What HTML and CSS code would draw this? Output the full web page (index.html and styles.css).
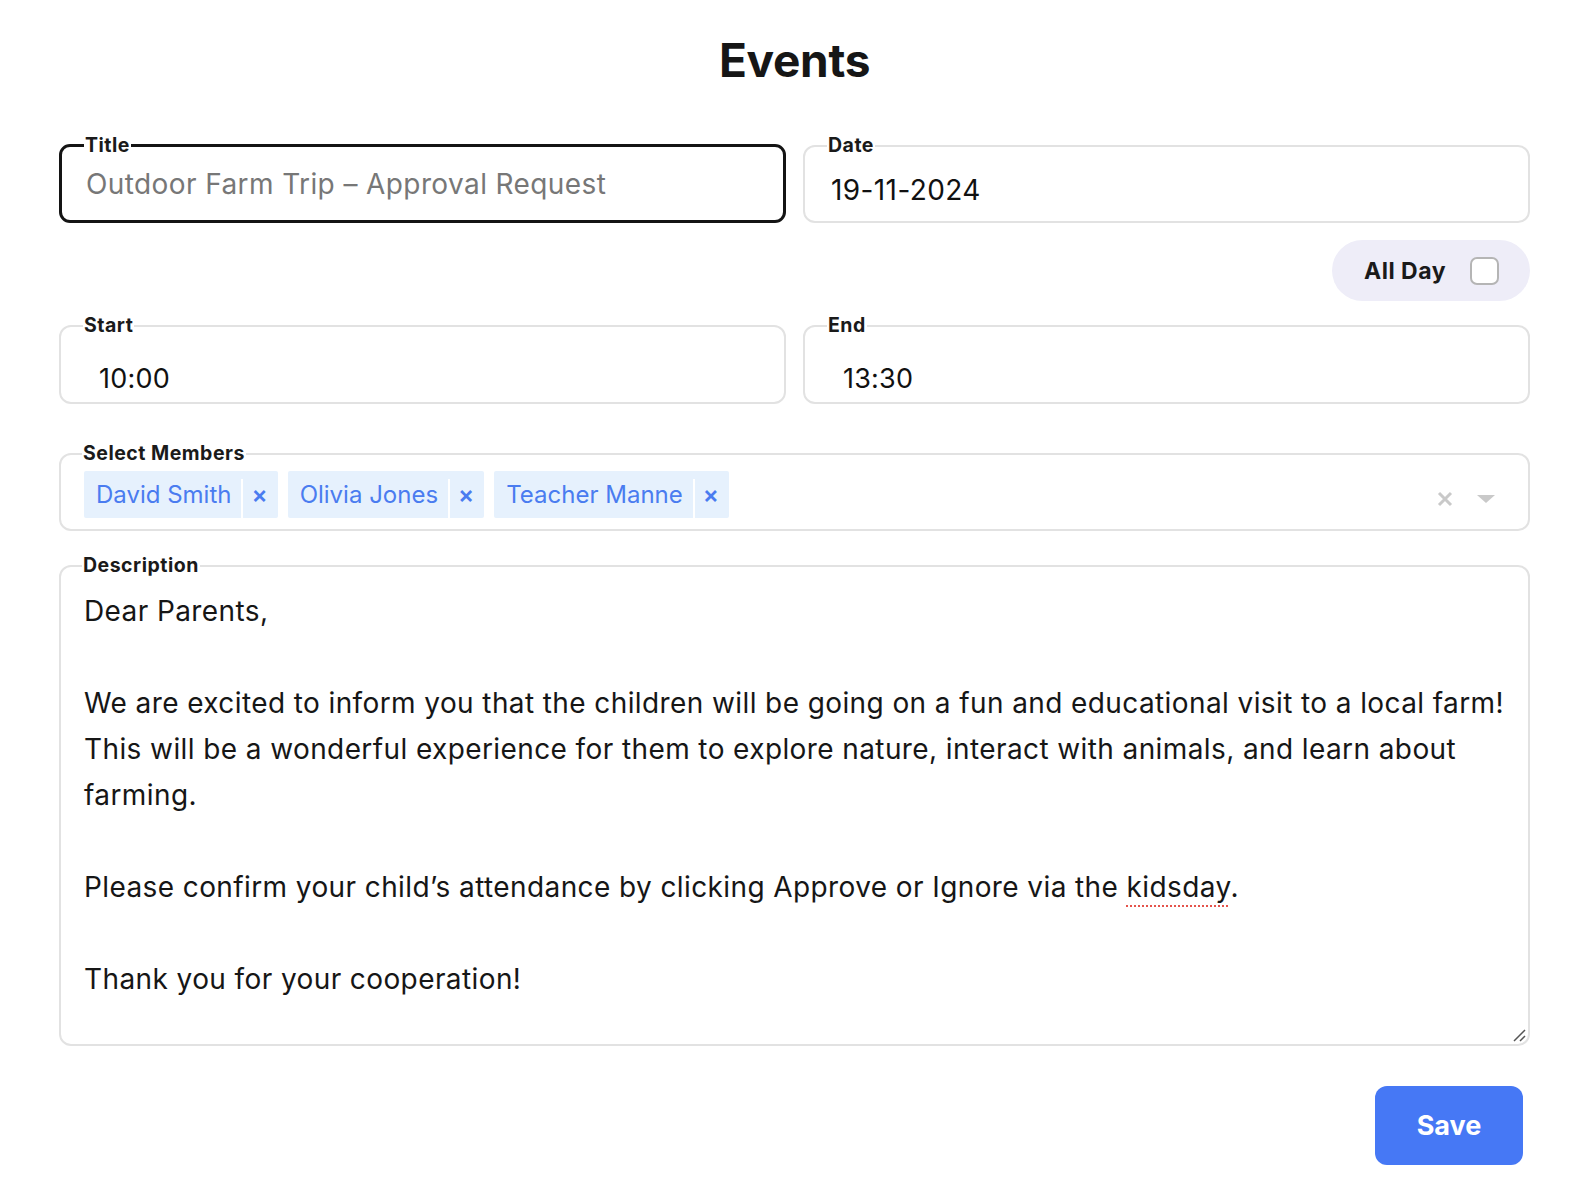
FILE: index.html
```html
<!DOCTYPE html>
<html lang="en">
<head>
<meta charset="utf-8">
<title>Events</title>
<link rel="stylesheet" href="styles.css">
</head>
<body>
<main class="page">
  <h1 class="page-title">Events</h1>
  <div class="grid">
    <fieldset class="field field-focus">
      <legend class="field-label">Title</legend>
      <div class="field-value placeholder">Outdoor Farm Trip – Approval Request</div>
    </fieldset>
    <fieldset class="field field-date">
      <legend class="field-label">Date</legend>
      <div class="field-value">19-11-2024</div>
    </fieldset>
    <div class="allday-row">
      <label class="allday">
        <span class="allday-text">All Day</span>
        <span class="checkbox"></span>
      </label>
    </div>
    <fieldset class="field field-time">
      <legend class="field-label">Start</legend>
      <div class="field-value time-value">10:00</div>
    </fieldset>
    <fieldset class="field field-time">
      <legend class="field-label">End</legend>
      <div class="field-value time-value">13:30</div>
    </fieldset>
  </div>

  <fieldset class="field field-members">
    <legend class="field-label">Select Members</legend>
    <div class="members">
      <div class="chips">
        <span class="chip"><span class="chip-label">David Smith</span><span class="chip-x">×</span></span>
        <span class="chip"><span class="chip-label">Olivia Jones</span><span class="chip-x">×</span></span>
        <span class="chip"><span class="chip-label">Teacher Manne</span><span class="chip-x">×</span></span>
      </div>
      <div class="indicators">
        <svg class="clear-icon" width="18" height="18" viewBox="0 0 18 18"><path d="M3 3L15 15M15 3L3 15" stroke="#c9c9c9" stroke-width="3" stroke-linecap="butt"/></svg>
        <svg class="arrow-icon" width="20" height="10" viewBox="0 0 20 10"><path d="M1 1H19L10 9Z" fill="#c9c9c9"/></svg>
      </div>
    </div>
  </fieldset>

  <fieldset class="field field-desc">
    <legend class="field-label">Description</legend>
    <div class="desc">
      <p>Dear Parents,</p>
      <p class="blank">&nbsp;</p>
      <p>We are excited to inform you that the children will be going on a fun and educational visit to a local farm! This will be a wonderful experience for them to explore nature, interact with animals, and learn about farming.</p>
      <p class="blank">&nbsp;</p>
      <p>Please confirm your child’s attendance by clicking Approve or Ignore via the <span class="spell">kidsday</span>.</p>
      <p class="blank">&nbsp;</p>
      <p>Thank you for your cooperation!</p>
    </div>
    <svg class="resize" width="16" height="16" viewBox="0 0 16 16"><path d="M15 4L4 15M15 10L10 15" stroke="#555" stroke-width="1.5"/></svg>
  </fieldset>

  <div class="actions">
    <button class="save">Save</button>
  </div>
</main>
</body>
</html>
```

FILE: styles.css
```css
* { box-sizing: border-box; }
html, body { margin: 0; padding: 0; background: #fff; }
body {
  font-family: Inter, "Noto Sans", "Liberation Sans", sans-serif;
  color: #1a1a1a;
}
.page {
  padding: 28px 46px 40px 59px;
}
.page-title {
  margin: 0 0 42px;
  text-align: center;
  font-size: 46px;
  font-weight: 700;
  letter-spacing: -0.3px;
  line-height: 64px;
  color: #161616;
}
.grid {
  display: grid;
  grid-template-columns: 1fr 1fr;
  column-gap: 17px;
}
.field {
  position: relative;
  margin: 0;
  min-width: 0;
  border: 2px solid #e2e2e2;
  border-radius: 12px;
  padding: 0 20px;
}
.field-label {
  padding: 0 1px;
  font-size: 19.5px;
  font-weight: 700;
  letter-spacing: 0.5px;
  line-height: 23px;
  color: #1a1a1a;
}
.field-value {
  font-size: 28px;
  letter-spacing: 0.4px;
  line-height: 32px;
  color: #111;
}
.time-value {
  font-size: 27px;
  letter-spacing: 0.2px;
}
.field-focus {
  border: 3px solid #141414;
  border-radius: 11px;
  padding: 11px 19px 20px 24px;
}
.field-focus .field-label { margin-left: -2px; }
.placeholder { color: #777; }
.field-date {
  padding: 17px 22px 15px 26px;
}
.field-date .field-label { margin-left: -4px; }
.allday-row {
  grid-column: 2;
  display: flex;
  justify-content: flex-end;
  margin: 17px 0 13px;
}
.allday {
  display: flex;
  align-items: center;
  gap: 24px;
  height: 61px;
  padding: 0 31px 0 32px;
  background: #eeedf8;
  border-radius: 31px;
}
.allday-text {
  font-size: 23px;
  font-weight: 700;
  letter-spacing: 0.5px;
  color: #1a1a1a;
}
.checkbox {
  width: 29px;
  height: 28px;
  border: 2px solid #b5b5b5;
  border-radius: 7px;
  background: #fff;
}
.field-time {
  padding: 26px 20px 7px 38px;
}
.field-time .field-label { margin-left: -16px; }
.field-members {
  margin-top: 38px;
  padding: 6px 32px 11px 23px;
}
.field-members .field-label { margin-left: -2px; }
.members {
  display: flex;
  align-items: center;
  justify-content: space-between;
}
.chips {
  display: flex;
  gap: 10px;
}
.chip {
  display: flex;
  align-items: center;
  height: 47px;
  background: #e6f1fd;
  border-radius: 2px;
  color: #4a7cf0;
  font-size: 24px;
}
.chip-label {
  padding: 0 10px 0 12px;
  border-right: 2px solid #fff;
  margin-top: 8px;
  height: 39px;
  line-height: 31px;
}
.chip-x {
  padding: 0 10px 0 8px;
  font-size: 24px;
  font-weight: 600;
}
.indicators {
  display: flex;
  align-items: center;
  gap: 22px;
  padding-top: 8px;
}
.field-desc {
  margin-top: 23px;
  padding: 11px 18px 42px 23px;
}
.field-desc .field-label { margin-left: -2px; }
.desc p {
  margin: 0;
  font-size: 28px;
  letter-spacing: 0.4px;
  line-height: 46px;
  color: #161616;
}
.spell {
  text-decoration: underline dotted #e5534b;
  text-decoration-thickness: 2px;
  text-underline-offset: 8px;
}
.resize {
  position: absolute;
  right: 2px;
  bottom: 2px;
}
.actions {
  display: flex;
  justify-content: flex-end;
  margin-top: 40px;
  padding-right: 7px;
}
.save {
  width: 148px;
  height: 79px;
  border: none;
  border-radius: 12px;
  background: #4678f5;
  color: #fff;
  font-family: Inter, "Noto Sans", sans-serif;
  font-size: 27px;
  font-weight: 700;
}
```
